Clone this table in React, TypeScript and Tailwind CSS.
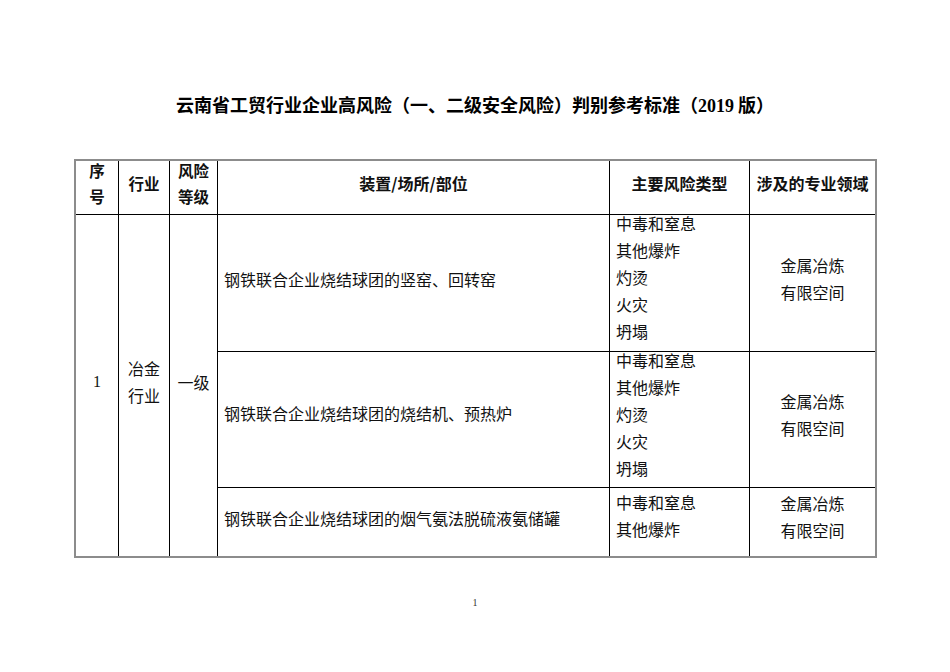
import React from "react";

const risks5 = ["中毒和窒息", "其他爆炸", "灼烫", "火灾", "坍塌"];
const risks2 = ["中毒和窒息", "其他爆炸"];

const head =
  "flex flex-col items-center justify-center border-r border-b border-black pb-[9px] font-bold leading-[26px]";

export default function App() {
  return (
    <div className="h-[672px] w-[950px] bg-white text-black font-['Noto_Sans_CJK_SC','Noto_Sans',sans-serif]">
      <div className="pt-[91px] text-center text-[18px] font-bold leading-[27px]">
        云南省工贸行业企业高风险（一、二级安全风险）判别参考标准（
        <span className="font-['Liberation_Serif',serif]">2019</span> 版）
      </div>

      <div className="ml-[74px] mt-[39px] grid w-[803px] grid-cols-[43px_51px_48px_392px_140px_125px] grid-rows-[54px_137px_136px_68px] border-2 border-[#8c8c8c] text-[16px] text-[#111]">
        {/* header */}
        <div className={head + " text-[15.5px]"}>
          <div>序</div>
          <div>号</div>
        </div>
        <div className={head + " text-[15.5px]"}>行业</div>
        <div className={head + " text-[15.5px]"}>
          <div>风险</div>
          <div>等级</div>
        </div>
        <div className={head}>装置/场所/部位</div>
        <div className={head}>主要风险类型</div>
        <div className="flex items-center justify-center border-b border-black pb-[9px] font-bold leading-[26px]">
          涉及的专业领域
        </div>

        {/* merged first three columns */}
        <div className="col-start-1 row-start-2 row-span-3 flex items-center justify-center border-r border-black pb-[7px] font-['Liberation_Serif',serif]">
          1
        </div>
        <div className="col-start-2 row-start-2 row-span-3 flex flex-col items-center justify-center border-r border-black pb-[7px] leading-[27px]">
          <div>冶金</div>
          <div>行业</div>
        </div>
        <div className="col-start-3 row-start-2 row-span-3 flex items-center justify-center border-r border-black pb-[8px]">
          一级
        </div>

        {/* row 1 */}
        <div className="col-start-4 row-start-2 flex items-center border-r border-b border-black pb-[8px] pl-[6px]">
          钢铁联合企业烧结球团的竖窑、回转窑
        </div>
        <div className="col-start-5 row-start-2 flex flex-col border-r border-b border-black pl-[6px] leading-[27px]">
          <div className="-mt-[5px]">
            {risks5.map((t) => (
              <div key={t}>{t}</div>
            ))}
          </div>
        </div>
        <div className="col-start-6 row-start-2 flex flex-col items-center justify-center border-b border-black pb-[8px] leading-[27px]">
          <div>金属冶炼</div>
          <div>有限空间</div>
        </div>

        {/* row 2 */}
        <div className="col-start-4 row-start-3 flex items-center border-r border-b border-black pb-[14px] pl-[6px]">
          钢铁联合企业烧结球团的烧结机、预热炉
        </div>
        <div className="col-start-5 row-start-3 flex flex-col border-r border-b border-black pl-[6px] leading-[27px]">
          <div className="-mt-[5px]">
            {risks5.map((t) => (
              <div key={t}>{t}</div>
            ))}
          </div>
        </div>
        <div className="col-start-6 row-start-3 flex flex-col items-center justify-center border-b border-black pb-[10px] leading-[27px]">
          <div>金属冶炼</div>
          <div>有限空间</div>
        </div>

        {/* row 3 */}
        <div className="col-start-4 row-start-4 flex items-center border-r border-black pb-[9px] pl-[6px]">
          钢铁联合企业烧结球团的烟气氨法脱硫液氨储罐
        </div>
        <div className="col-start-5 row-start-4 flex flex-col border-r border-black pl-[6px] pt-[1px] leading-[27px]">
          {risks2.map((t) => (
            <div key={t}>{t}</div>
          ))}
        </div>
        <div className="col-start-6 row-start-4 flex flex-col items-center justify-center pb-[10px] leading-[27px]">
          <div>金属冶炼</div>
          <div>有限空间</div>
        </div>
      </div>

      <div className="mt-[37px] text-center text-[10px] text-[#333] font-['Liberation_Serif',serif]">
        1
      </div>
    </div>
  );
}
